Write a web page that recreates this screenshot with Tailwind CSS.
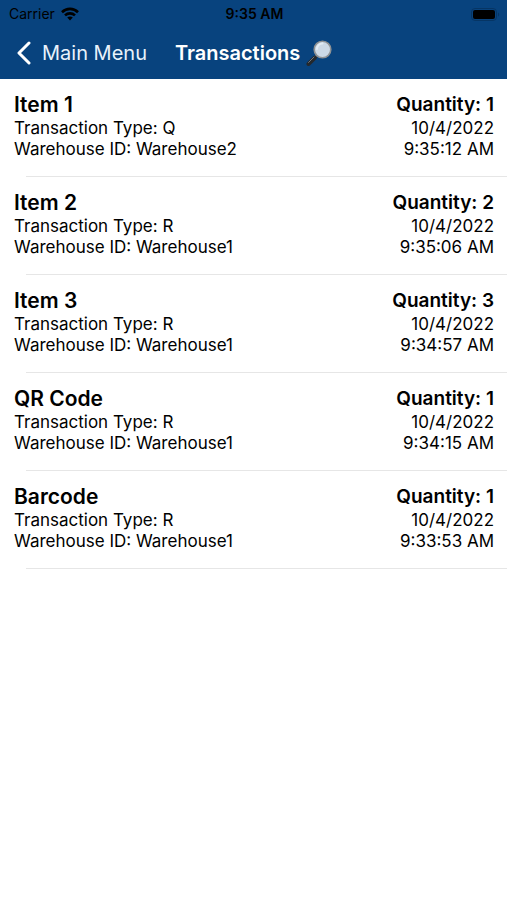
<!DOCTYPE html>
<html lang="en">
  <head>
    <meta charset="UTF-8" />
    <meta name="viewport" content="width=device-width, initial-scale=1.0" />
    <script src="https://cdn.jsdelivr.net/npm/@tailwindcss/browser@4"></script>
    <title>Transactions</title>
  </head>
  <body class="bg-white text-black font-['Inter',sans-serif]">
    <header class="bg-[#08437e]">
      <!-- Status bar -->
      <div class="grid grid-cols-3 items-center h-7 pl-[9px] pr-[7px] text-sm">
        <div class="flex items-center gap-[6px]">
          <span>Carrier</span>
          <svg class="w-[18px] h-[14px]" viewBox="0 0 18 14" fill="none" stroke="#000" stroke-width="2.6">
            <path d="M1 5.2C5.5 .8 12.5 .8 17 5.2" />
            <path d="M4 8.4C6.8 5.7 11.2 5.7 14 8.4" />
            <path d="M9 13.5L6.2 10.6C7.8 9.2 10.2 9.2 11.8 10.6Z" fill="#000" stroke="none" />
          </svg>
        </div>
        <span class="text-center font-semibold">9:35 AM</span>
        <svg class="justify-self-end w-[29px] h-[13px]" viewBox="0 0 29 13">
          <rect x=".5" y=".5" width="25" height="12" rx="3.5" fill="none" stroke="#063564" />
          <rect x="2" y="2" width="22" height="9" rx="2" fill="#000" />
          <path d="M27 4.500c1.6.6 1.6 3.4 0 4z" fill="#063564" />
        </svg>
      </div>

      <!-- Navigation bar -->
      <nav class="flex items-center h-[51px] pl-4 pb-[2px] text-white">
        <a href="#" class="flex items-center gap-[10px] text-xl text-[#e9f2fb]">
          <svg class="w-4 h-6" viewBox="0 0 16 24" fill="none" stroke="#fff" stroke-width="3" stroke-linecap="round" stroke-linejoin="round">
            <path d="M13 2L3 12l10 10" />
          </svg>
          Main Menu
        </a>
        <h1 class="flex items-center gap-[6px] ml-7 text-xl font-semibold">
          Transactions
          <svg class="w-[26px] h-[26px]" viewBox="0 0 26 26">
            <path d="M11.5 15L8.5 18" stroke="#9a9fa5" stroke-width="2" />
            <path d="M9 17.5L2.5 24" stroke="#24282c" stroke-width="4" stroke-linecap="round" />
            <path d="M8 17L2.5 22.5" stroke="#70767c" stroke-width="1" stroke-linecap="round" />
            <circle cx="16.5" cy="9.5" r="8.3" fill="#ccd9e6" stroke="#8f9294" stroke-width="1.6" />
            <path d="M11 9a5.5 5.5 0 0 1 5.5-5.5" fill="none" stroke="#e2ebf3" stroke-width="2" stroke-linecap="round" />
          </svg>
        </h1>
      </nav>
    </header>

    <main>
      <ul>
        <li>
          <div class="flex justify-between pl-[14px] pr-[13px] pt-3 pb-4">
            <div>
              <h2 class="text-[21px] leading-[27px] font-semibold">Item 1</h2>
              <p class="text-[17px] leading-[21px]">Transaction Type: Q</p>
              <p class="text-[17px] leading-[21px]">Warehouse ID: Warehouse2</p>
            </div>
            <div class="text-right">
              <p class="text-[19px] leading-[27px] font-semibold">Quantity: 1</p>
              <p class="text-[17px] leading-[21px]">10/4/2022</p>
              <p class="text-[17px] leading-[21px]">9:35:12 AM</p>
            </div>
          </div>
          <hr class="ml-[26px] border-[#e6e6e6]" />
        </li>
        <li>
          <div class="flex justify-between pl-[14px] pr-[13px] pt-3 pb-4">
            <div>
              <h2 class="text-[21px] leading-[27px] font-semibold">Item 2</h2>
              <p class="text-[17px] leading-[21px]">Transaction Type: R</p>
              <p class="text-[17px] leading-[21px]">Warehouse ID: Warehouse1</p>
            </div>
            <div class="text-right">
              <p class="text-[19px] leading-[27px] font-semibold">Quantity: 2</p>
              <p class="text-[17px] leading-[21px]">10/4/2022</p>
              <p class="text-[17px] leading-[21px]">9:35:06 AM</p>
            </div>
          </div>
          <hr class="ml-[26px] border-[#e6e6e6]" />
        </li>
        <li>
          <div class="flex justify-between pl-[14px] pr-[13px] pt-3 pb-4">
            <div>
              <h2 class="text-[21px] leading-[27px] font-semibold">Item 3</h2>
              <p class="text-[17px] leading-[21px]">Transaction Type: R</p>
              <p class="text-[17px] leading-[21px]">Warehouse ID: Warehouse1</p>
            </div>
            <div class="text-right">
              <p class="text-[19px] leading-[27px] font-semibold">Quantity: 3</p>
              <p class="text-[17px] leading-[21px]">10/4/2022</p>
              <p class="text-[17px] leading-[21px]">9:34:57 AM</p>
            </div>
          </div>
          <hr class="ml-[26px] border-[#e6e6e6]" />
        </li>
        <li>
          <div class="flex justify-between pl-[14px] pr-[13px] pt-3 pb-4">
            <div>
              <h2 class="text-[21px] leading-[27px] font-semibold">QR Code</h2>
              <p class="text-[17px] leading-[21px]">Transaction Type: R</p>
              <p class="text-[17px] leading-[21px]">Warehouse ID: Warehouse1</p>
            </div>
            <div class="text-right">
              <p class="text-[19px] leading-[27px] font-semibold">Quantity: 1</p>
              <p class="text-[17px] leading-[21px]">10/4/2022</p>
              <p class="text-[17px] leading-[21px]">9:34:15 AM</p>
            </div>
          </div>
          <hr class="ml-[26px] border-[#e6e6e6]" />
        </li>
        <li>
          <div class="flex justify-between pl-[14px] pr-[13px] pt-3 pb-4">
            <div>
              <h2 class="text-[21px] leading-[27px] font-semibold">Barcode</h2>
              <p class="text-[17px] leading-[21px]">Transaction Type: R</p>
              <p class="text-[17px] leading-[21px]">Warehouse ID: Warehouse1</p>
            </div>
            <div class="text-right">
              <p class="text-[19px] leading-[27px] font-semibold">Quantity: 1</p>
              <p class="text-[17px] leading-[21px]">10/4/2022</p>
              <p class="text-[17px] leading-[21px]">9:33:53 AM</p>
            </div>
          </div>
          <hr class="ml-[26px] border-[#e6e6e6]" />
        </li>
      </ul>
    </main>
  </body>
</html>
